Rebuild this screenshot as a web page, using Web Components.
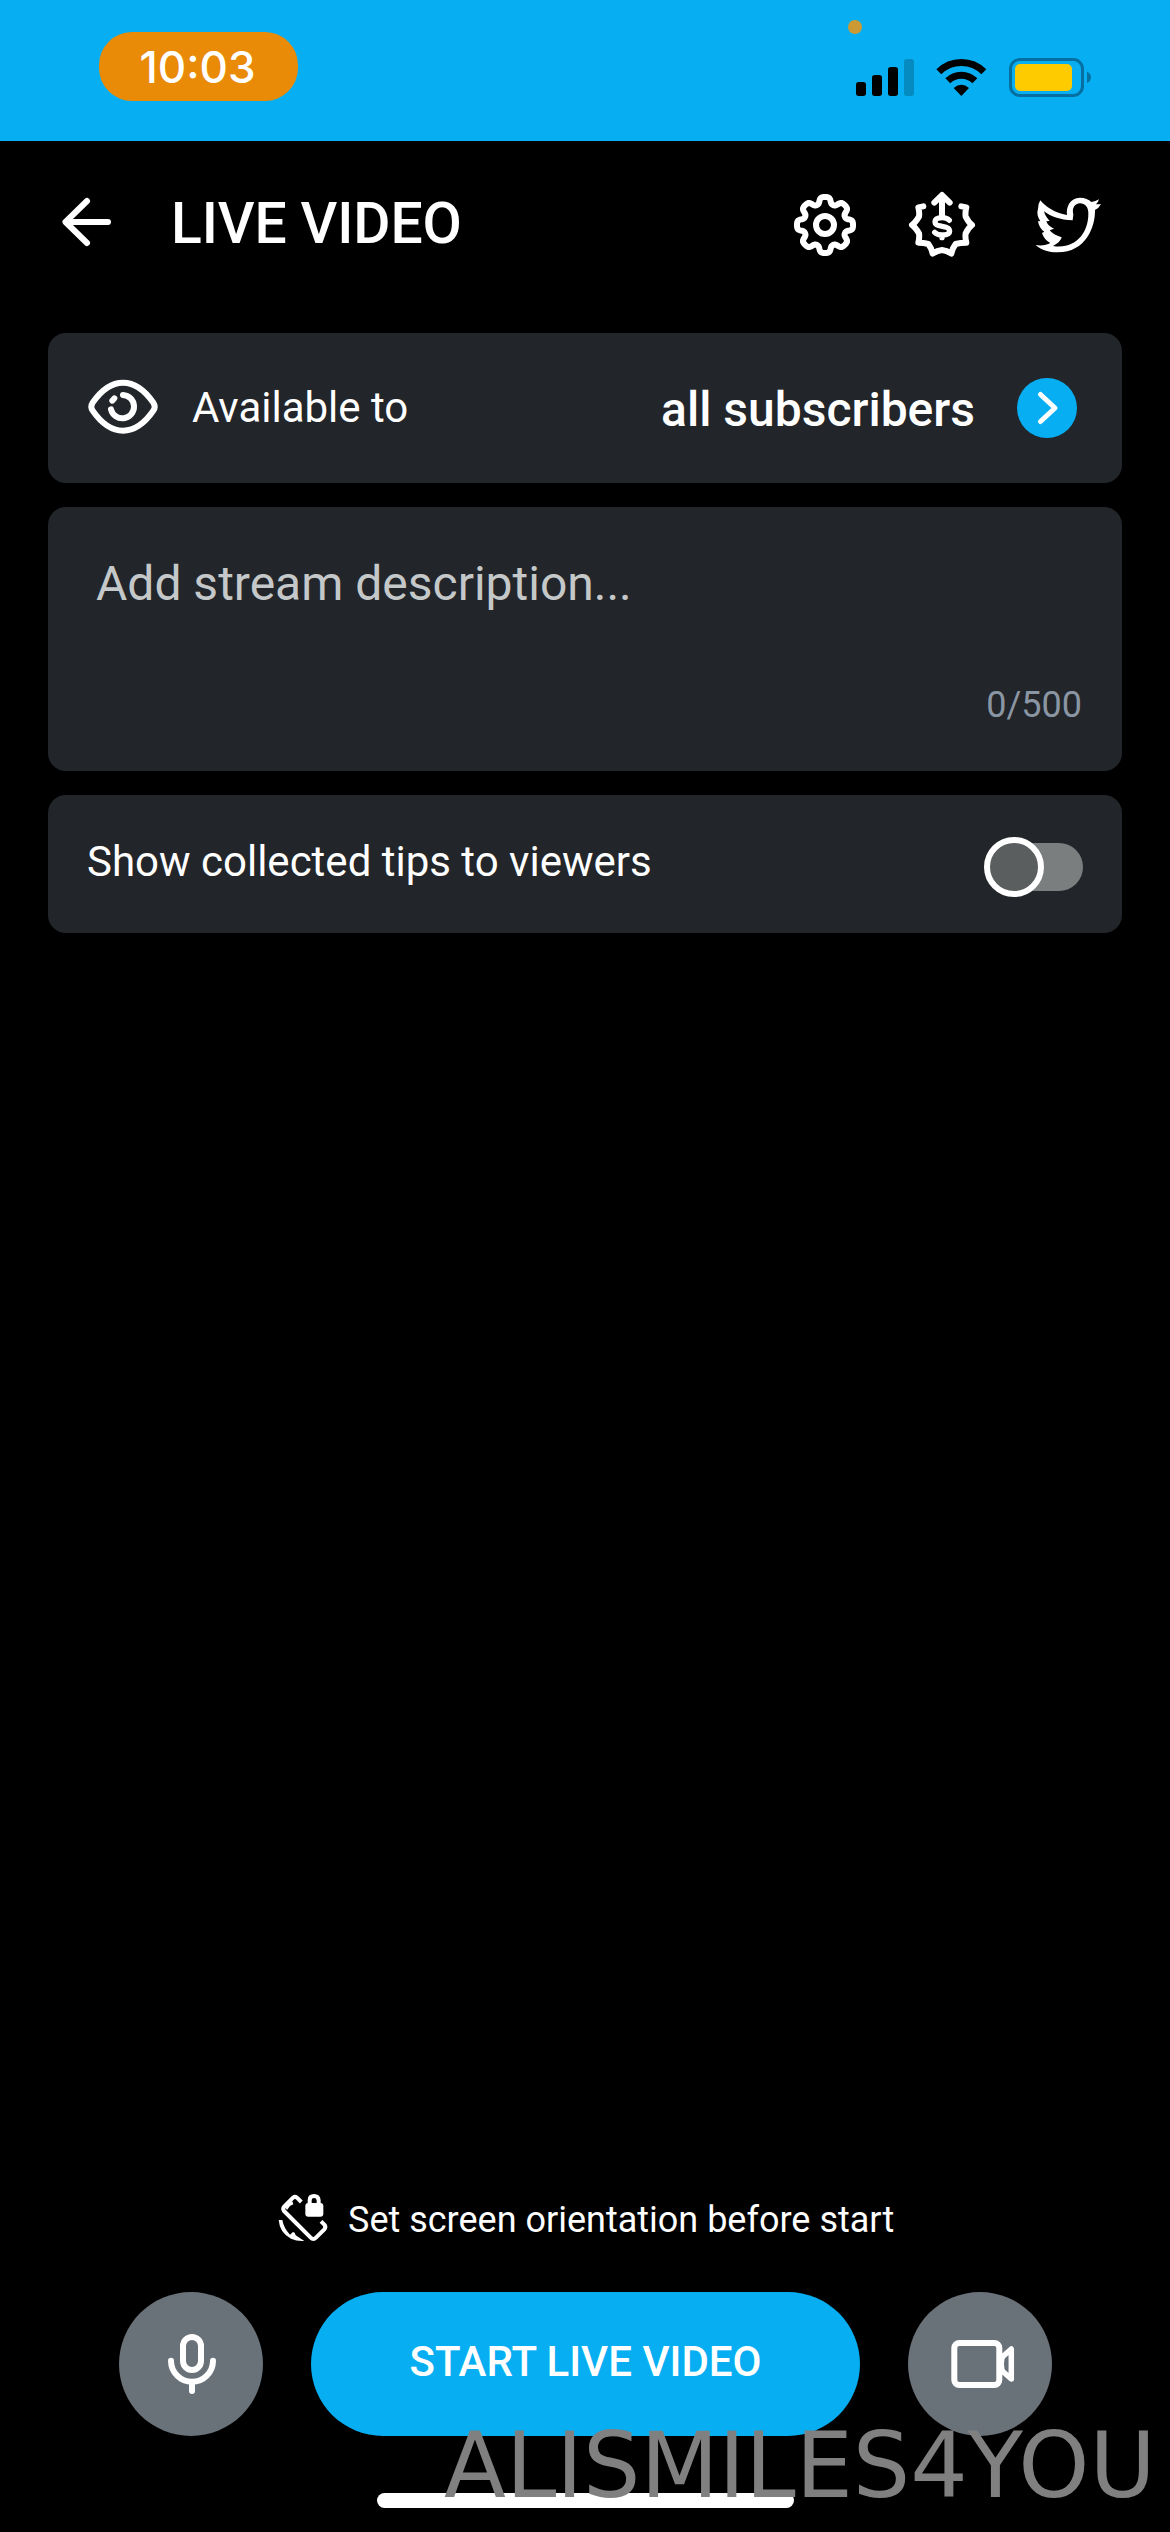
<!DOCTYPE html>
<html lang="en">
<head>
<meta charset="utf-8">
<title>Live video</title>
<style>
html,body{margin:0;padding:0;background:#000}
body{width:1170px;height:2532px;overflow:hidden;font-family:Roboto,"Liberation Sans",sans-serif;color:#fff}
</style>
</head>
<body>
<live-screen></live-screen>
<script>
function define(name, html, setup) {
  const tpl = document.createElement('template');
  tpl.innerHTML = html;
  customElements.define(name, class extends HTMLElement {
    constructor() {
      super();
      this.attachShadow({mode: 'open'}).appendChild(tpl.content.cloneNode(true));
      if (setup) setup(this.shadowRoot, this);
    }
  });
}

define('status-bar', `
<style>
:host{display:flex;justify-content:space-between;box-sizing:border-box;height:141px;background:#07aff2;padding:0 76px 0 99px}
.time{box-sizing:border-box;margin-top:32px;width:199px;height:69px;padding-right:2px;border-radius:33px;background:#e98b07;display:flex;align-items:center;justify-content:center;font:500 44px/1 Inter,sans-serif}
svg{display:block}
</style>
<div class="time">10:03</div>
<svg width="250" height="110" viewBox="252 0 750 330">
  <circle cx="285" cy="81" r="21" fill="#cb9a34"/>
  <rect x="288" y="246" width="30" height="42" rx="8"/>
  <rect x="336" y="225" width="30" height="63" rx="8"/>
  <rect x="384" y="201" width="30" height="87" rx="8"/>
  <rect x="432" y="177" width="30" height="111" rx="8" fill="#068bc0"/>
  <g fill="none" stroke="#000" stroke-width="21">
    <path d="M536.500 215.500A95.500 95.500 0 0 1 671.500 215.500"/>
    <path d="M563.400 242.400A57.500 57.500 0 0 1 644.600 242.400"/>
  </g>
  <path d="M581 264Q604 244 627 264L604 288Z"/>
  <rect x="751.500" y="178.500" width="216" height="108" rx="28" fill="none" stroke="#046fa0" stroke-width="9"/>
  <rect x="765" y="192" width="171" height="81" rx="15" fill="#fecb00"/>
  <path d="M981 215Q993 220 993 232Q993 244 981 249Z" fill="#046fa0"/>
</svg>`);

define('gear-icon', `
<style>:host{display:block}svg{display:block}</style>
<svg width="66" height="66" viewBox="-33 -33 66 66" fill="none" stroke="#fff" stroke-width="6" stroke-linejoin="round"><path/><circle r="9"/></svg>`,
root => {
  let d = '';
  for (let i = 0; i < 360; i++) {
    const a = i / 360 * Math.PI * 2;
    const r = 24.6 + 3.5 * Math.tanh(1.8 * (Math.cos(8 * a) + 0.25));
    d += (i ? 'L' : 'M') + (r * Math.cos(a)).toFixed(2) + ' ' + (r * Math.sin(a)).toFixed(2);
  }
  root.querySelector('path').setAttribute('d', d + 'Z');
});

define('tip-icon', `
<style>:host{display:block}svg{display:block}</style>
<svg width="70" height="70" viewBox="441 90 210 210" fill="none" stroke="#fff" stroke-width="18" stroke-linecap="round" stroke-linejoin="round">
  <path d="M490 139L475 142Q479 158 477 170Q466 188 456 195Q466 202 477 220Q479 232 475 248Q491 248 505 252Q514 263 518 281Q532 271 546 270Q560 271 574 281Q578 263 587 252Q601 248 619 248Q615 232 617 220Q626 202 636 195Q626 188 617 170Q615 158 619 142L604 139"/>
  <path d="M523 128L546 105L569 128M546 108V170"/>
  <path stroke-width="16" d="M568 181Q561 173 547 173Q525 173 525 186Q525 196 547 199Q569 202 569 213Q569 225 546 225Q532 225 524 217M546 225V233"/>
</svg>`);

define('bird-icon', `
<style>:host{display:block}svg{display:block}</style>
<svg width="72" height="72" viewBox="24 12 216 216">
  <path fill="#fff" fill-rule="evenodd" d="M46 46C62 66 90 84 126 90C123 66 134 39 165 38C180 38 191 43 199 51Q212 50 222 43Q219 53 213 58Q222 58 228 57Q222 69 210 75C211 126 183 202 98 202C70 202 48 195 32 180C47 183 65 181 76 174Q57 164 51 144L58 140Q42 130 39 108L46 109Q33 89 39 72Q39 56 46 46ZM57 79Q60 93 74 108L64 109Q67 122 87 131L74 136Q84 149 110 157Q108 170 84 183C150 194 191 145 190 84C190 67 180 55 165 55C149 55 140 70 145 88L143 106C105 105 76 94 57 79Z"/>
</svg>`);

define('app-bar', `
<style>
:host{display:flex;align-items:center;box-sizing:border-box;height:162px;padding:3px 65px 0 59px}
svg{display:block}
.back{margin-bottom:3px}
h1{margin:0 0 0 56px;flex:1;font-size:57px;line-height:66px;font-weight:500;letter-spacing:-.1px;white-space:nowrap}
gear-icon{margin:3px 49px 0 0}tip-icon{margin:3px 56px 0 0}bird-icon{margin-top:3px}
</style>
<svg class="back" width="56" height="56" viewBox="59 194 56 56" fill="none" stroke="#fff" stroke-width="6" stroke-linecap="round" stroke-linejoin="round"><path d="M108 222H66M87 201L65.500 222L87 243"/></svg>
<h1>LIVE VIDEO</h1>
<gear-icon></gear-icon><tip-icon></tip-icon><bird-icon></bird-icon>`);

define('panel-card', `
<style>:host{display:flex;box-sizing:border-box;width:1074px;background:#222529;border-radius:18px}</style><slot></slot>`);

define('audience-row', `
<style>
:host{display:flex;align-items:center;width:100%;padding:0 45px 0 37px;box-sizing:border-box}
svg{display:block}
.eye{margin-bottom:2px}
.label{margin-left:31px;font-size:42px;line-height:50px;flex:1}
.value{font-size:48px;line-height:56px;font-weight:500;margin:4px 42px 0 0}
</style>
<svg class="eye" width="76" height="64" viewBox="135 164 228 192" fill="none" stroke="#fff" stroke-width="18" stroke-linecap="round">
<path d="M158 247C182 212 212 187 249 187S316 212 340 247Q348 259 340 271C316 306 286 331 249 331S182 306 158 271Q150 259 158 247Z"/>
<path d="M249 224A35 35 0 1 1 213 267M217 241L223 234"/></svg>
<span class="label">Available to</span><span class="value">all subscribers</span>
<svg width="60" height="60" viewBox="0 0 60 60"><circle cx="30" cy="30" r="30" fill="#07aff2"/><path d="M23.500 16.500L38 30L23.500 43.500" fill="none" stroke="#fff" stroke-width="5" stroke-linecap="round" stroke-linejoin="round"/></svg>`);

define('description-field', `
<style>
:host{display:flex;flex-direction:column;justify-content:space-between;width:100%;box-sizing:border-box;padding:49px 40px 44px 48px}
.hint{font-size:48px;line-height:56px;color:#c5c8c9}
.count{align-self:flex-end;font-size:36px;line-height:44px;color:#8a96a3}
</style>
<span class="hint">Add stream description...</span><span class="count">0/500</span>`);

define('tips-row', `
<style>
:host{display:flex;align-items:center;justify-content:space-between;width:100%;box-sizing:border-box;padding:0 39px 0 39px}
.label{font-size:42px;line-height:50px;margin-bottom:5px}
.switch{display:flex;align-items:center;width:99px;height:60px;margin-top:6px}
.thumb{box-sizing:border-box;width:60px;height:60px;border:6px solid #fff;border-radius:50%;background:#5b5e5e;z-index:1}
.track{width:69px;height:48px;margin-left:-30px;border-radius:0 24px 24px 0;background:#7b7e7f}
</style>
<span class="label">Show collected tips to viewers</span><div class="switch"><div class="thumb"></div><div class="track"></div></div>`);

define('orientation-hint', `
<style>
:host{display:flex;align-items:center;height:60px;padding-left:275px}
svg{display:block}
span{margin:2px 0 0 17px;font-size:36px;line-height:44px;white-space:nowrap}
</style>
<svg width="56" height="56" viewBox="15 21 168 168" fill="none" stroke="#fff" stroke-width="12" stroke-linejoin="round">
<path d="M94 54L81 41Q75 36 69 41L43 67Q37 74 42 81L122 161Q130 169 138 161L163 136Q169 129 163 122L153 112"/>
<path fill="#fff" stroke="none" d="M45 69L57 54L67 52L70 61L60 66L51 78ZM26 108H37Q41 132 60 152L69 144L74 146L77 154L103 171Q82 173 63 164Q29 147 26 108Z"/>
<rect x="106" y="57" width="54" height="41" rx="9" fill="#fff" stroke="none"/>
<path d="M119 62V49Q119 36 132 36T146 49V62"/></svg>
<span>Set screen orientation before start</span>`);

define('round-button', `
<style>:host{display:flex;align-items:center;justify-content:center;width:144px;height:144px;border-radius:50%;background:#697179}</style><slot></slot>`);

define('start-button', `
<style>:host{display:flex;align-items:center;justify-content:center;box-sizing:border-box;width:549px;height:144px;padding-bottom:6px;border-radius:72px;background:#07aff2;font-size:42px;font-weight:500;white-space:nowrap}</style><slot></slot>`);

define('action-bar', `
<style>:host{display:flex;justify-content:space-between;padding:0 118px 0 119px}svg{display:block}</style>
<round-button><svg width="144" height="144" viewBox="57 66 432 432" fill="none" stroke="#fff" stroke-width="18" stroke-linecap="round"><rect x="249" y="201" width="54" height="99" rx="27"/><path d="M213 272A63 63 0 0 0 339 272M276 338V363"/></svg></round-button>
<start-button>START LIVE VIDEO</start-button>
<round-button><svg width="144" height="144" viewBox="908 2292 144 144" fill="none" stroke="#fff" stroke-width="6" stroke-linejoin="round"><rect x="954.300" y="2343" width="45" height="42" rx="5"/><path d="M1000 2359L1011.300 2349V2379L1000 2369" stroke-width="5.500"/><path d="M1000 2357L1006 2354Q1002 2364 1006 2374L1000 2371Z" fill="#fff" stroke="none"/></svg></round-button>`);

define('live-screen', `
<style>
:host{display:flex;flex-direction:column;position:relative;width:1170px;height:2532px;background:#000;overflow:hidden}
.cards{display:flex;flex-direction:column;align-items:center;gap:24px;margin-top:30px;flex:1}
.c1{height:150px}.c2{height:264px}.c3{height:138px}
.home{width:417px;height:15px;border-radius:8px;background:#fff;margin:57px 0 24px 377px}
.mark{position:absolute;left:444px;top:2413px;font:90.5px/105px "DejaVu Sans",sans-serif;color:#808080;white-space:nowrap}
orientation-hint{margin-bottom:43px}
</style>
<status-bar></status-bar>
<app-bar></app-bar>
<div class="cards">
<panel-card class="c1"><audience-row></audience-row></panel-card>
<panel-card class="c2"><description-field></description-field></panel-card>
<panel-card class="c3"><tips-row></tips-row></panel-card>
</div>
<orientation-hint></orientation-hint>
<action-bar></action-bar>
<div class="home"></div>
<div class="mark">ALISMILES4YOU</div>`);
</script>
</body>
</html>
